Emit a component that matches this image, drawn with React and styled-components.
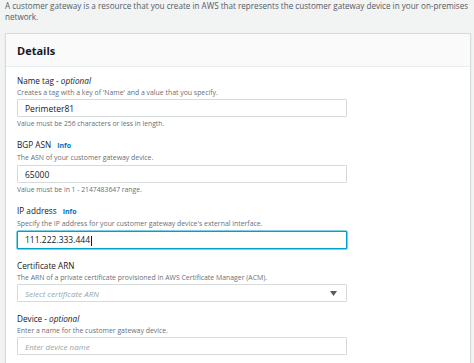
import styled, { createGlobalStyle } from "styled-components";

const GlobalStyle = createGlobalStyle`
  html, body {
    margin: 0;
    padding: 0;
    background: #f2f3f3;
  }
  body {
    font-family: "Open Sans", "Liberation Sans", sans-serif;
    color: #16191f;
    overflow: hidden;
  }
`;

const Page = styled.div`
  padding: 0 3px 0 5px;
  height: 363px;
  overflow: hidden;
`;

const Intro = styled.p`
  margin: 0 0 11px;
  font-size: 8.1px;
  line-height: 11px;
  color: #545b64;
`;

const Card = styled.section`
  background: #fff;
  border: 1px solid #dadcdc;
  box-shadow: 0 1px 1px rgba(0, 28, 36, 0.15);
`;

const CardHeader = styled.header`
  background: #fafafa;
  border-bottom: 1px solid #eaeded;
  height: 32px;
  padding: 0 11px;
  display: flex;
  align-items: center;

  h2 {
    margin: 0;
    font-size: 11px;
    font-weight: 700;
  }
`;

const Form = styled.div`
  padding: 8px 11px 20px;
  display: flex;
  flex-direction: column;
  gap: 11px;
`;

const Field = styled.div`
  display: flex;
  flex-direction: column;
`;

const Label = styled.div`
  font-size: 8.2px;
  line-height: 12px;
  display: flex;
  align-items: baseline;
  gap: 6px;

  em {
    font-style: italic;
  }
`;

const Info = styled.span`
  color: #0073bb;
  font-weight: 700;
  font-size: 7px;
`;

const Description = styled.div`
  font-size: 6.9px;
  line-height: 11px;
  color: #687078;
`;

const Input = styled.div`
  margin-top: ${(p) => (p.$tight ? 1 : 2)}px;
  width: 330px;
  height: 18px;
  box-sizing: border-box;
  border: 1px solid ${(p) => (p.$focus ? "#00a1c9" : "#d5dbdb")};
  box-shadow: ${(p) => (p.$focus ? "0 0 0 0.5px #00a1c9" : "none")};
  border-radius: 1px;
  padding: 0 7px;
  display: flex;
  align-items: center;
  justify-content: space-between;
  font-size: ${(p) => (p.$placeholder ? 8 : 8.5)}px;
  color: ${(p) => (p.$placeholder ? "#95a5a6" : "#16191f")};
  font-style: ${(p) => (p.$placeholder ? "italic" : "normal")};
  background: #fff;
`;

const Caret = styled.span`
  display: inline-block;
  width: 1px;
  height: 10px;
  background: #16191f;
  margin-left: 1px;
  vertical-align: middle;
`;

const Constraint = styled.div`
  margin-top: 2px;
  font-size: 6.8px;
  line-height: 9px;
  color: #687078;
`;

const Arrow = styled.svg`
  width: 7px;
  height: 5px;
  margin-right: 2px;
`;

export default function App() {
  return (
    <>
      <GlobalStyle />
      <Page>
        <Intro>
          A customer gateway is a resource that you create in AWS that represents the
          customer gateway device in your on-premises network.
        </Intro>
        <Card>
          <CardHeader>
            <h2>Details</h2>
          </CardHeader>
          <Form>
            <Field>
              <Label>
                <span>
                  Name tag - <em>optional</em>
                </span>
              </Label>
              <Description>Creates a tag with a key of 'Name' and a value that you specify.</Description>
              <Input $tight>Perimeter81</Input>
              <Constraint>Value must be 256 characters or less in length.</Constraint>
            </Field>
            <Field>
              <Label>
                BGP ASN <Info>Info</Info>
              </Label>
              <Description>The ASN of your customer gateway device.</Description>
              <Input>65000</Input>
              <Constraint>Value must be in 1 - 2147483647 range.</Constraint>
            </Field>
            <Field>
              <Label>
                IP address <Info>Info</Info>
              </Label>
              <Description>Specify the IP address for your customer gateway device's external interface.</Description>
              <Input $focus>
                <span>
                  111.222.333.444
                  <Caret />
                </span>
              </Input>
            </Field>
            <Field>
              <Label>Certificate ARN</Label>
              <Description>The ARN of a private certificate provisioned in AWS Certificate Manager (ACM).</Description>
              <Input $placeholder $tight>
                Select certificate ARN
                <Arrow viewBox="0 0 7 5">
                  <path d="M0 0h7L3.5 5z" fill="#545b64" />
                </Arrow>
              </Input>
            </Field>
            <Field>
              <Label>
                <span>
                  Device - <em>optional</em>
                </span>
              </Label>
              <Description>Enter a name for the customer gateway device.</Description>
              <Input $placeholder $tight>Enter device name</Input>
            </Field>
          </Form>
        </Card>
      </Page>
    </>
  );
}
